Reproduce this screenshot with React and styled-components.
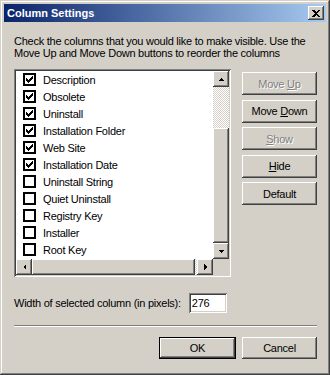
import React from 'react';
import styled, {createGlobalStyle, css} from 'styled-components';

const GlobalStyle = createGlobalStyle`
  html, body {
    margin: 0;
    padding: 0;
    background: #d4d0c8;
  }
  body {
    font-family: 'Liberation Sans', Arial, sans-serif;
    font-size: 11px;
    letter-spacing: -0.25px;
    color: #000;
  }
`;

const raised = css`
  box-shadow: inset -1px -1px #404040, inset 1px 1px #ffffff,
    inset -2px -2px #808080, inset 2px 2px #d4d0c8;
`;

const sunken = css`
  box-shadow: inset 1px 1px #808080, inset -1px -1px #ffffff,
    inset 2px 2px #404040, inset -2px -2px #d4d0c8;
`;

const Window = styled.div`
  width: 330px;
  height: 375px;
  box-sizing: border-box;
  padding: 4px;
  background: #d4d0c8;
  display: flex;
  flex-direction: column;
  box-shadow: inset -1px -1px #404040, inset 1px 1px #d4d0c8,
    inset -2px -2px #808080, inset 2px 2px #ffffff;
`;

const TitleBar = styled.div`
  height: 18px;
  display: flex;
  align-items: center;
  justify-content: space-between;
  padding: 0 2px 0 3px;
  background: linear-gradient(to right, #0a246a, #a6caf0);
  color: #fff;
  font-weight: 700;
  font-size: 11px;
  letter-spacing: 0;
`;

const CloseButton = styled.div`
  width: 16px;
  height: 14px;
  background: #d4d0c8;
  display: flex;
  align-items: center;
  justify-content: center;
  ${raised};
`;

const Content = styled.div`
  flex: 1;
  display: flex;
  flex-direction: column;
  padding: 13px 9px 0 10px;
`;

const Intro = styled.p`
  margin: 0;
  line-height: 12px;
`;

const MainRow = styled.div`
  display: flex;
  gap: 11px;
  margin-top: 10px;
`;

const ListBox = styled.div`
  width: 217px;
  height: 208px;
  box-sizing: border-box;
  padding: 2px;
  background: #fff;
  display: grid;
  grid-template-columns: 1fr 16px;
  grid-template-rows: 1fr 16px;
  ${sunken};
`;

const Items = styled.ul`
  list-style: none;
  margin: 0;
  padding: 0;
  overflow: hidden;
`;

const Item = styled.li`
  height: 17px;
  display: flex;
  align-items: center;
  gap: 7px;
  padding-left: 7px;
`;

const CheckBox = styled.span`
  width: 13px;
  height: 13px;
  box-sizing: border-box;
  border: 2px solid #000;
  background: #fff;
  display: flex;
  align-items: center;
  justify-content: center;
`;

const VScroll = styled.div`
  display: flex;
  flex-direction: column;
`;

const HScroll = styled.div`
  display: flex;
`;

const ArrowButton = styled.div`
  width: 16px;
  height: 16px;
  flex: none;
  background: #d4d0c8;
  display: flex;
  align-items: center;
  justify-content: center;
  ${raised};
`;

const Track = styled.div`
  flex: ${p => p.$size};
  background: repeating-conic-gradient(#ffffff 0 25%, #d4d0c8 0 50%) 0 0 / 2px 2px;
`;

const Thumb = styled.div`
  flex: ${p => p.$size};
  background: #d4d0c8;
  ${raised};
`;

const Corner = styled.div`
  background: #d4d0c8;
`;

const ButtonColumn = styled.div`
  display: flex;
  flex-direction: column;
  gap: 4.5px;
  padding-top: 3px;
`;

const Button = styled.div`
  width: ${p => p.$width || 75}px;
  height: ${p => p.$height || 23}px;
  box-sizing: border-box;
  background: #d4d0c8;
  display: flex;
  align-items: center;
  justify-content: center;
  color: ${p => (p.$disabled ? '#808080' : '#000')};
  text-shadow: ${p => (p.$disabled ? '1px 1px #ffffff' : 'none')};
  ${raised};
  ${p => p.$default && css`
    border: 1px solid #000;
    box-shadow: inset -1px -1px #404040, inset 1px 1px #ffffff,
      inset -2px -2px #808080, inset 2px 2px #d4d0c8;
  `}
  u {
    text-decoration: underline;
    text-underline-offset: 1px;
  }
`;

const WidthRow = styled.div`
  display: flex;
  align-items: center;
  gap: 8px;
  margin-top: 16px;
`;

const NumberField = styled.div`
  width: 38px;
  height: 20px;
  box-sizing: border-box;
  padding: 0 3px;
  background: #fff;
  display: flex;
  align-items: center;
  ${sunken};
`;

const Separator = styled.div`
  height: 2px;
  margin: 12px 0 0;
  border-top: 1px solid #808080;
  border-bottom: 1px solid #ffffff;
  box-sizing: border-box;
`;

const Footer = styled.div`
  display: flex;
  justify-content: flex-end;
  gap: 6px;
  margin-top: 10px;
`;

const Arrow = ({dir}) => {
  const paths = {
    up: 'M4 1 L7 4 L1 4 Z',
    down: 'M1 1 L7 1 L4 4 Z',
    left: 'M1 4 L4 1 L4 7 Z',
    right: 'M1 1 L4 4 L1 7 Z',
  };
  const size = dir === 'up' || dir === 'down' ? [8, 5] : [5, 8];
  return (
    <svg width={size[0]} height={size[1]} viewBox={`0 0 ${size[0]} ${size[1]}`}>
      <path d={paths[dir]} fill="#000" shapeRendering="crispEdges" />
    </svg>
  );
};

const columns = [
  {name: 'Description', on: true},
  {name: 'Obsolete', on: true},
  {name: 'Uninstall', on: true},
  {name: 'Installation Folder', on: true},
  {name: 'Web Site', on: true},
  {name: 'Installation Date', on: true},
  {name: 'Uninstall String', on: false},
  {name: 'Quiet Uninstall', on: false},
  {name: 'Registry Key', on: false},
  {name: 'Installer', on: false},
  {name: 'Root Key', on: false},
];

const App = () => (
  <>
    <GlobalStyle />
    <Window>
      <TitleBar>
        <span>Column Settings</span>
        <CloseButton>
          <svg width="8" height="7" viewBox="0 0 8 7">
            <path d="M0 0h2l2 2 2-2h2L5 3.5 8 7H6L4 5 2 7H0l3-3.5z" fill="#000" shapeRendering="crispEdges" />
          </svg>
        </CloseButton>
      </TitleBar>
      <Content>
        <Intro>
          Check the columns that you would like to make visible. Use the Move Up and Move Down buttons to reorder the columns
        </Intro>
        <MainRow>
          <ListBox>
            <Items>
              {columns.map(c => (
                <Item key={c.name}>
                  <CheckBox>
                    {c.on && (
                      <svg width="7" height="7" viewBox="0 0 7 7">
                        <path d="M0 2h1v1h1v1h1V3h1V2h1V1h1V0h1v3H6v1H5v1H4v1H3v1H2V6H1V5H0z" fill="#000" shapeRendering="crispEdges" />
                      </svg>
                    )}
                  </CheckBox>
                  <span>{c.name}</span>
                </Item>
              ))}
            </Items>
            <VScroll>
              <ArrowButton><Arrow dir="up" /></ArrowButton>
              <Track $size={41} />
              <Thumb $size={115} />
              <ArrowButton><Arrow dir="down" /></ArrowButton>
            </VScroll>
            <HScroll>
              <ArrowButton><Arrow dir="left" /></ArrowButton>
              <Thumb $size={163} />
              <Track $size={2} />
              <ArrowButton><Arrow dir="right" /></ArrowButton>
            </HScroll>
            <Corner />
          </ListBox>
          <ButtonColumn>
            <Button $disabled><span>Move <u>U</u>p</span></Button>
            <Button><span>Move <u>D</u>own</span></Button>
            <Button $disabled><span><u>S</u>how</span></Button>
            <Button><span><u>H</u>ide</span></Button>
            <Button><span>Default</span></Button>
          </ButtonColumn>
        </MainRow>
        <WidthRow>
          <span>Width of selected column (in pixels):</span>
          <NumberField>276</NumberField>
        </WidthRow>
        <Separator />
        <Footer>
          <Button $default $width={77} $height={22}><span>OK</span></Button>
          <Button $width={75} $height={22}><span>Cancel</span></Button>
        </Footer>
      </Content>
    </Window>
  </>
);

export default App;
